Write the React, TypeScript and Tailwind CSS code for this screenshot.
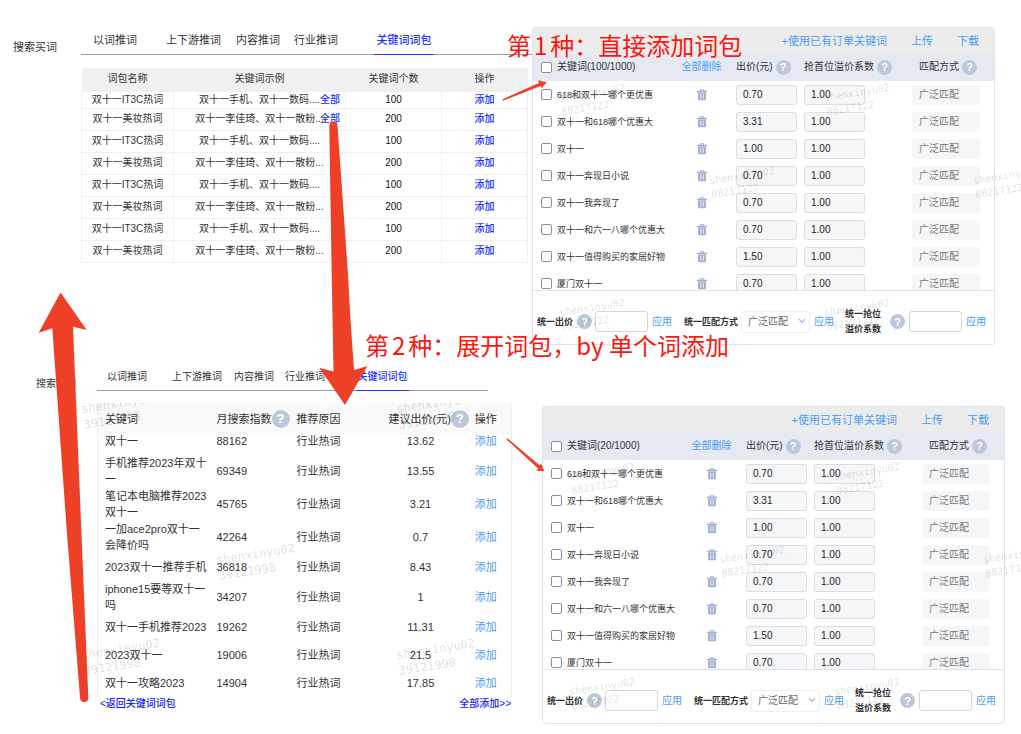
import type { ReactNode } from 'react'

const TABS = ['以词推词', '上下游推词', '内容推词', '行业推词', '关键词词包']

const PACKS = Array.from({ length: 8 }, (_, i) =>
  i % 2 === 0
    ? { name: '双十一IT3C热词', sample: '双十一手机、双十一数码....', count: 100 }
    : { name: '双十一美妆热词', sample: '双十一李佳琦、双十一散粉...', count: 200 },
)

const WORDS = [
  { word: '双十一', index: 88162, bid: '13.62', row: 'h-[19px] align-top leading-3' },
  { word: '手机推荐2023年双十一', index: 69349, bid: '13.55', row: 'h-[33px]' },
  { word: '笔记本电脑推荐2023双十一', index: 45765, bid: '3.21', row: 'h-[33px]' },
  { word: '一加ace2pro双十一会降价吗', index: 42264, bid: '0.7', row: 'h-[33px]' },
  { word: '2023双十一推荐手机', index: 36818, bid: '8.43', row: 'h-7' },
  { word: 'iphone15要等双十一吗', index: 34207, bid: '1', row: 'h-8' },
  { word: '双十一手机推荐2023', index: 19262, bid: '11.31', row: 'h-7' },
  { word: '2023双十一', index: 19006, bid: '21.5', row: 'h-7' },
  { word: '双十一攻略2023', index: 14904, bid: '17.85', row: 'h-7' },
]

const ORDER = [
  { word: '618和双十一哪个更优惠', bid: '0.70' },
  { word: '双十一和618哪个优惠大', bid: '3.31' },
  { word: '双十一', bid: '1.00' },
  { word: '双十一奔现日小说', bid: '0.70' },
  { word: '双十一我奔现了', bid: '0.70' },
  { word: '双十一和六一八哪个优惠大', bid: '0.70' },
  { word: '双十一值得购买的家居好物', bid: '1.50' },
  { word: '厦门双十一', bid: '0.70' },
]

function Help({ large = false }: { large?: boolean }) {
  return (
    <span
      className={`inline-flex shrink-0 items-center justify-center rounded-full bg-[#bcc8da] font-bold text-white ${
        large ? 'size-[18px] text-[13px]' : 'size-[15px] text-[11px]'
      }`}
    >
      ?
    </span>
  )
}

function TrashIcon() {
  return (
    <svg viewBox="0 0 20 24" className="h-3 w-[10px]" fill="none" aria-hidden="true">
      <path d="M6.5 4V1.5h7V4" stroke="#a0add0" strokeWidth="2" />
      <path d="M0 3.5h20v3H0z" fill="#a0add0" />
      <path d="M2 7h16v13.5a2 2 0 0 1-2 2H4a2 2 0 0 1-2-2z" fill="#a3b0cf" />
      <path d="M7.5 9.5v10M12.5 9.5v10" stroke="#e9edf6" strokeWidth="2" />
    </svg>
  )
}

function Watermark({ id, place, large = false }: { id: string; place: string; large?: boolean }) {
  return (
    <div
      aria-hidden="true"
      className={`pointer-events-none absolute -rotate-9 font-['DejaVu_Sans_Mono',monospace] whitespace-nowrap text-black/14 ${
        large ? 'text-[12px] leading-4' : 'text-[10px] leading-[14px]'
      } ${place}`}
    >
      <div>shenxinyu02</div>
      <div>{id}</div>
    </div>
  )
}

function TabBar({ columns }: { columns: string }) {
  return (
    <div role="tablist" className={`grid h-7 border-b border-[#9b9b9b] text-[#333] ${columns}`}>
      {TABS.map((tab, i) => {
        const active = i === TABS.length - 1
        return (
          <button
            key={tab}
            type="button"
            role="tab"
            aria-selected={active}
            className={
              active
                ? '-mb-px border-b border-[#1a35ff] text-center font-medium whitespace-nowrap text-[#1a35ff]'
                : 'text-left whitespace-nowrap'
            }
          >
            {tab}
          </button>
        )
      })}
    </div>
  )
}

function PackTable() {
  return (
    <table className="w-full table-fixed border-collapse text-center text-[10px] leading-3 text-[#333]">
      <colgroup>
        <col className="w-[92px]" />
        <col className="w-[172px]" />
        <col className="w-[96px]" />
        <col className="w-[86px]" />
      </colgroup>
      <thead>
        <tr className="h-[23px] bg-[#f0f0f0]">
          <th className="font-normal">词包名称</th>
          <th className="font-normal">关键词示例</th>
          <th className="font-normal">关键词个数</th>
          <th className="font-normal">操作</th>
        </tr>
      </thead>
      <tbody>
        {PACKS.map((p, i) => (
          <tr key={i} className={i === 0 ? 'h-[17px]' : 'h-[22px]'}>
            <td className="border border-[#f0f0f0]">{p.name}</td>
            <td className="relative border border-[#f0f0f0] whitespace-nowrap">
              {p.sample}
              {i < 2 && (
                <a href="#all" className="absolute inset-y-0 right-[5px] flex items-center font-medium text-[#1230ff]">
                  全部
                </a>
              )}
            </td>
            <td className="border border-[#f0f0f0] text-[#111]">{p.count}</td>
            <td className="border border-[#f0f0f0]">
              <button type="button" className="font-medium text-[#1230ff]">添加</button>
            </td>
          </tr>
        ))}
      </tbody>
    </table>
  )
}

function WordTable() {
  return (
    <div className="relative">
      <table className="w-full table-fixed border-x border-[#eee] text-left text-[11px] leading-4 text-[#333]">
        <colgroup>
          <col className="w-[119px]" />
          <col className="w-[80px]" />
          <col className="w-[84px]" />
          <col className="w-[80px]" />
          <col className="w-[51px]" />
        </colgroup>
        <thead>
          <tr className="h-8 bg-[#f9f9f9] whitespace-nowrap">
            <th className="pl-[7px] font-normal">关键词</th>
            <th className="font-normal">
              <span className="flex items-center">月搜索指数<Help large /></span>
            </th>
            <th className="font-normal">推荐原因</th>
            <th className="font-normal">
              <span className="flex items-center pl-2">建议出价(元)<Help large /></span>
            </th>
            <th className="text-center font-normal">操作</th>
          </tr>
        </thead>
        <tbody>
          {WORDS.map(w => (
            <tr key={w.word} className={w.row}>
              <td className="pr-2 pl-[7px]">{w.word}</td>
              <td>{w.index}</td>
              <td>行业热词</td>
              <td className="text-center">{w.bid}</td>
              <td className="text-center">
                <button type="button" className="text-[#4a9cf7]">添加</button>
              </td>
            </tr>
          ))}
        </tbody>
      </table>
      <div className="pointer-events-none absolute inset-y-0 right-0 -left-4 overflow-hidden">
        <Watermark large id="39121998" place="-top-2 left-px" />
        <Watermark large id="39121998" place="-top-2 left-[316px]" />
        <Watermark large id="39121998" place="top-[143px] left-[136px]" />
        <Watermark large id="39121998" place="top-[238px] left-px" />
        <Watermark large id="39121998" place="top-[238px] left-[316px]" />
      </div>
    </div>
  )
}

function Apply() {
  return <button type="button" className="ml-1 shrink-0 text-[10px] text-[#4a9cf7]">应用</button>
}

function OrderPanel({ id, used }: { id: string; used: number }) {
  const box = 'block size-[11px] shrink-0 appearance-none rounded-[2px] border border-[#8f8f8f] bg-white'
  const field = 'block h-5 w-[61px] rounded-[3px] border border-[#dcdde0] bg-[#f5f6f8] pl-1.5 text-[#222]'
  const bulk = 'h-[21px] w-[53px] shrink-0 rounded-[3px] border border-[#d5d6da] bg-white px-1.5'

  return (
    <section className="relative rounded-[3px] border border-[#dde2ee] text-[10px] leading-3 text-[#333]">
      <div className="flex h-[25px] items-center justify-end gap-6 bg-[#ececec] pr-[15px] text-[11px] text-[#4a9cf7]">
        <a href="#orders">+使用已有订单关键词</a>
        <a href="#upload">上传</a>
        <a href="#download">下载</a>
      </div>

      <div className="h-[238px] overflow-hidden border-b border-[#dde2ee]">
        <table className="w-full table-fixed text-left">
          <colgroup>
            <col className="w-[145px]" />
            <col className="w-[47px]" />
            <col className="w-[79px]" />
            <col className="w-[108px]" />
            <col className="w-[82px]" />
          </colgroup>
          <thead>
            <tr className="h-7 bg-[#e6e9f2] whitespace-nowrap">
              <th className="pl-2 font-normal">
                <span className="flex items-center gap-[5px]">
                  <input type="checkbox" id={`${id}-all`} className={box} />
                  <label htmlFor={`${id}-all`}>关键词({used}/1000)</label>
                </span>
              </th>
              <th className="text-center font-normal">
                <button type="button" className="text-[#4a9cf7]">全部删除</button>
              </th>
              <th className="pl-[11px] font-normal">
                <span className="flex items-center gap-[3px]">出价(元)<Help /></span>
              </th>
              <th className="font-normal">
                <span className="flex items-center gap-[3px]">抢首位溢价系数<Help /></span>
              </th>
              <th className="pl-[7px] font-normal">
                <span className="flex items-center gap-[3px]">匹配方式<Help /></span>
              </th>
            </tr>
          </thead>
          <tbody>
            {ORDER.map((k, i) => (
              <tr key={k.word} className="h-[27px]">
                <td className="pl-2">
                  <span className="flex items-center gap-[5px]">
                    <input type="checkbox" id={`${id}-${i}`} className={box} />
                    <label htmlFor={`${id}-${i}`} className="text-[9px] whitespace-nowrap">{k.word}</label>
                  </span>
                </td>
                <td>
                  <button type="button" aria-label="删除" className="mx-auto block">
                    <TrashIcon />
                  </button>
                </td>
                <td className="pl-[11px]">
                  <input aria-label="出价" defaultValue={k.bid} className={field} />
                </td>
                <td>
                  <input aria-label="抢首位溢价系数" defaultValue="1.00" className={field} />
                </td>
                <td>
                  <select
                    aria-label="匹配方式"
                    disabled
                    className="block h-5 w-[68px] appearance-none rounded-[3px] bg-[#f5f6f8] pl-[7px] text-[#777] opacity-100"
                  >
                    <option>广泛匹配</option>
                  </select>
                </td>
              </tr>
            ))}
          </tbody>
        </table>
      </div>

      <div className="flex h-[53px] items-center pt-2 pl-1 whitespace-nowrap">
        <label htmlFor={`${id}-bid`} className="mr-1 text-[9px] font-bold">统一出价</label>
        <Help />
        <input id={`${id}-bid`} className={`ml-[3px] ${bulk}`} />
        <Apply />
        <label htmlFor={`${id}-match`} className="ml-3 text-[9px] font-bold">统一匹配方式</label>
        <span className="relative ml-[3px] shrink-0">
          <select
            id={`${id}-match`}
            className="block h-[22px] w-[69px] appearance-none rounded-[3px] border border-[#eceef3] bg-white pl-1.5 text-[#666]"
          >
            <option>广泛匹配</option>
          </select>
          <svg viewBox="0 0 8 8" className="pointer-events-none absolute top-1.5 right-1 size-2" fill="none" aria-hidden="true">
            <path d="M1 2.2 4 5.4 7 2.2" stroke="#a3b1cf" strokeWidth="1.1" />
          </svg>
        </span>
        <Apply />
        <label htmlFor={`${id}-ratio`} className="mr-[9px] ml-[11px] text-[9px] leading-[15px] font-bold">
          统一抢位
          <br />
          溢价系数
        </label>
        <Help />
        <input id={`${id}-ratio`} className={`ml-1 ${bulk}`} />
        <Apply />
      </div>

      <Watermark id="88217122" place="top-[58px] left-[27px]" />
      <Watermark id="88217122" place="top-[58px] left-[292px]" />
      <Watermark id="88217122" place="top-[141px] left-[177px]" />
      <Watermark id="88217122" place="top-[141px] left-[441px]" />
      <Watermark id="88217122" place="top-[273px] left-[27px]" />
      <Watermark id="88217122" place="top-[273px] left-[292px]" />
    </section>
  )
}

function Note({ step, place, children }: { step: number; place: string; children: ReactNode }) {
  return (
    <p
      className={`absolute font-['Noto_Sans_CJK_SC',sans-serif] text-[24px] leading-9 whitespace-nowrap text-[#fb1710] ${place}`}
    >
      第<span className="mx-[3px]">{step}</span>种：{children}
    </p>
  )
}

function Arrows() {
  return (
    <svg
      viewBox="0 0 1021 734"
      className="pointer-events-none absolute top-0 left-0 h-[734px] w-[1021px]"
      fill="#ee4026"
      aria-hidden="true"
    >
      <path d="M329.3 125.5Q329.3 121.5 333.3 121.5Q337.3 121.5 337.5 125.5L347.7 270L350.5 320L354 370L367.4 366L345 405L319.3 367.7L333.5 371.5L331.6 270Z" />
      <path d="M60.5 292.5L86.7 330L73 326.7L81.3 530L88.3 697.5Q88.4 702 84.2 702Q80.2 702 80 697.5L66.7 530L52.3 328.3L38.7 332.7Z" />
      <path d="M502.5 99.3L539 83L538 80.2L546.8 82.2L541.5 88.2L540.5 86L502.8 100.7Z" />
      <path d="M507.2 438.2L539.5 465.3L541 463.5L544.4 471.2L536.5 470.8L538 468.5L506.4 439.4Z" />
    </svg>
  )
}

export default function App() {
  return (
    <main className="relative overflow-x-hidden bg-white pb-[10px] font-['Liberation_Sans','Noto_Sans_CJK_SC',sans-serif]">
      <div className="grid grid-cols-[68px_minmax(0,451fr)_minmax(0,463fr)] items-start pt-[27px] pr-[26px] pl-[13px]">
        <h2 className="pt-3 text-[11px] leading-4 text-[#333]">搜索买词</h2>
        <div>
          <TabBar columns="grid-cols-[73px_70px_58px_80px_60px] pl-3 text-[11px]" />
          <div className="pt-[13px] pr-1.5">
            <PackTable />
          </div>
        </div>
        <OrderPanel id="pack" used={100} />
      </div>

      <div className="mt-[18px] grid grid-cols-[61px_minmax(0,445fr)_minmax(0,463fr)] items-start pr-4 pl-9">
        <h2 className="pt-[13px] text-[10px] leading-4 text-[#333]">搜索买词</h2>
        <div className="pr-[31px]">
          <div className="pr-[23px]">
            <TabBar columns="grid-cols-[65px_62px_51px_71px_53px] pl-2.5 text-[10px]" />
          </div>
          <div className="pt-3">
            <WordTable />
          </div>
          <div className="flex justify-between pl-[3px] text-[10px] leading-[14px] font-medium text-[#1220ff]">
            <a href="#back">&lt;返回关键词词包</a>
            <a href="#add-all">全部添加&gt;&gt;</a>
          </div>
        </div>
        <div className="pt-[43px]">
          <OrderPanel id="word" used={20} />
        </div>
      </div>

      <Arrows />
      <Note step={1} place="top-[27px] left-[507px]">直接添加词包</Note>
      <Note step={2} place="top-[327px] left-[365px]">展开词包，by 单个词添加</Note>
    </main>
  )
}
